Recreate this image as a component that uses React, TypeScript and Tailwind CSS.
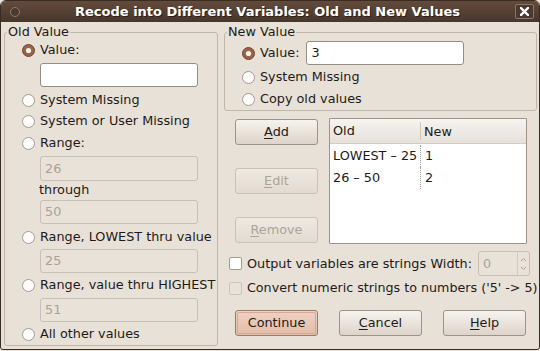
import React from 'react';

const font = { fontFamily: '"DejaVu Sans", Verdana, sans-serif' };

const Radio = ({ checked = false }: { checked?: boolean }) => (
  <svg width="13" height="13" viewBox="0 0 13 13" className="shrink-0">
    {checked ? (
      <>
        <circle cx="6.5" cy="6.5" r="6" fill="#9a6446" stroke="#6e4631" strokeWidth="1" />
        <circle cx="6.5" cy="6.5" r="2.6" fill="#fbf4ee" />
      </>
    ) : (
      <circle cx="6.5" cy="6.5" r="6" fill="#fdfcfb" stroke="#a39a90" strokeWidth="1" />
    )}
  </svg>
);

const RadioRow = ({ label, checked, h }: { label: string; checked?: boolean; h: string }) => (
  <div className={`flex items-center gap-[5px] ${h}`}>
    <Radio checked={checked} />
    <span className="whitespace-nowrap text-[12.8px] leading-none text-[#1e1a17]">{label}</span>
  </div>
);

const DimInput = ({ value, mt, h }: { value: string; mt: string; h: string }) => (
  <div
    className={`ml-[18px] w-[158px] ${mt} ${h} flex items-center rounded-[3px] border border-[#c9bfb4] bg-[#e9e2d9] pl-[4px] text-[12.8px] text-[#aaa198]`}
  >
    {value}
  </div>
);

const Btn = ({
  label,
  u,
  disabled,
  primary,
}: {
  label: string;
  u: number;
  disabled?: boolean;
  primary?: boolean;
}) => {
  const base = primary
    ? 'border-[#9c7a68] bg-gradient-to-b from-[#f0d2c3] to-[#e2bca8] text-[#1e1a17]'
    : disabled
      ? 'border-[#cbc1b6] bg-gradient-to-b from-[#efe9e2] to-[#e3dbd1] text-[#aca398]'
      : 'border-[#9e9387] bg-gradient-to-b from-[#f6f3ef] to-[#ddd4ca] text-[#1e1a17]';
  return (
    <div
      className={`flex h-[26px] w-[83px] items-center justify-center rounded-[3px] border text-[12.8px] ${base}`}
    >
      {primary ? (
        <div className="flex h-[22px] w-[79px] items-center justify-center rounded-[2px] border border-[#d7a991]">
          {label}
        </div>
      ) : (
        <span>
          {label.slice(0, u)}
          <span className="underline underline-offset-2">{label[u]}</span>
          {label.slice(u + 1)}
        </span>
      )}
    </div>
  );
};

export default function App() {
  return (
    <div style={font} className="h-[351px] w-[540px] bg-[#ebe4db]">
      <div className="flex h-[350px] w-[540px] flex-col overflow-hidden rounded-t-[6px] rounded-b-[3px] border border-[#3a2c22] bg-[#e8e1d8]">
        {/* title bar */}
        <div className="flex h-[21px] shrink-0 items-center bg-gradient-to-b from-[#624b3c] to-[#47362b]">
          <div className="ml-[9px] h-[10px] w-[10px] rounded-full border border-[#8c7b6f] bg-[#4b3a2f]" />
          <div
            className="flex-1 whitespace-nowrap text-center text-[13px] font-bold text-white"
            style={{ textShadow: '1px 1px 0 #2a1e17' }}
          >
            Recode into Different Variables: Old and New Values
          </div>
          <div className="mr-[5px] flex h-[15px] w-[19px] items-center justify-center rounded-[2px] border border-[#8a7668] bg-[#4c392d]">
            <svg width="9" height="9" viewBox="0 0 9 9">
              <path d="M1 1 L8 8 M8 1 L1 8" stroke="#ffffff" strokeWidth="2.4" strokeLinecap="square" />
            </svg>
          </div>
        </div>

        {/* body */}
        <div className="flex gap-[6px] pl-[3px]">
          {/* Old value */}
          <fieldset className="mt-[2px] h-[322px] w-[214px] shrink-0 rounded-[3px] border border-[#c2b6a9] pl-[17px]">
            <legend className="-ml-[15px] px-[1px] text-[12.8px] leading-[16px] text-[#1e1a17]">Old Value</legend>
            <RadioRow label="Value:" checked h="h-[21px]" />
            <div className="ml-[18px] mt-[2px] h-[24px] w-[158px] rounded-[3px] border border-[#978c80] bg-white" />
            <RadioRow label="System Missing" h="h-[22px] mt-[2px]" />
            <RadioRow label="System or User Missing" h="h-[21px]" />
            <RadioRow label="Range:" h="h-[22px]" />
            <DimInput value="26" mt="mt-[2px]" h="h-[25px]" />
            <div className="ml-[17px] flex h-[18px] items-center text-[12.8px] text-[#1e1a17]">through</div>
            <DimInput value="50" mt="mt-[1px]" h="h-[24px]" />
            <RadioRow label="Range, LOWEST thru value" h="h-[22px] mt-[2px]" />
            <DimInput value="25" mt="mt-[1px]" h="h-[24px]" />
            <RadioRow label="Range, value thru HIGHEST" h="h-[22px] mt-[1px]" />
            <DimInput value="51" mt="mt-[2px]" h="h-[24px]" />
            <RadioRow label="All other values" h="h-[22px] mt-[1px]" />
          </fieldset>

          {/* right column */}
          <div className="flex w-[313px] shrink-0 flex-col">
            <fieldset className="mt-[2px] h-[87px] rounded-[3px] border border-[#c2b6a9] pl-[17px]">
              <legend className="-ml-[15px] px-[1px] text-[12.8px] leading-[16px] text-[#1e1a17]">New Value</legend>
              <div className="flex h-[26px] items-center gap-[5px]">
                <Radio checked />
                <span className="text-[12.8px] text-[#1e1a17]">Value:</span>
                <div className="ml-[2px] flex h-[24px] w-[158px] items-center rounded-[3px] border border-[#978c80] bg-white pl-[4px] text-[12.8px] text-[#1e1a17]">
                  3
                </div>
              </div>
              <RadioRow label="System Missing" h="h-[22px]" />
              <RadioRow label="Copy old values" h="h-[22px]" />
            </fieldset>

            <div className="mt-[7px] flex pl-[11px]">
              <div className="flex flex-col gap-[23px] pt-[1px]">
                <Btn label="Add" u={0} />
                <Btn label="Edit" u={0} disabled />
                <Btn label="Remove" u={0} disabled />
              </div>
              <div className="ml-[11px] h-[126px] w-[198px] rounded-[1px] border border-[#9f9386] bg-white">
                <div className="flex h-[25px] items-center border-b border-[#d3cbc1] bg-gradient-to-b from-[#f6f4f1] to-[#e6e0d9] text-[12.8px] text-[#1e1a17]">
                  <div className="w-[90px] pl-[3px]">Old</div>
                  <div className="h-[18px] border-l border-[#cfc6bc] pl-[3px]">New</div>
                </div>
                <div className="pt-[1px] text-[12.8px] text-[#1e1a17]">
                  <div className="flex h-[22px] items-center">
                    <div className="w-[90px] whitespace-nowrap pl-[3px]">LOWEST – 25</div>
                    <div className="flex h-full items-center border-l border-dotted border-[#9a9a9a] pl-[4px]">1</div>
                  </div>
                  <div className="flex h-[22px] items-center">
                    <div className="w-[90px] pl-[3px]">26 – 50</div>
                    <div className="flex h-full items-center border-l border-dotted border-[#9a9a9a] pl-[4px]">2</div>
                  </div>
                </div>
              </div>
            </div>

            <div className="mt-[7px] flex h-[25px] items-center pl-[5px] pr-[7px] text-[12.8px] text-[#1e1a17]">
              <div className="h-[13px] w-[13px] shrink-0 rounded-[2px] border border-[#a39a90] bg-white" />
              <span className="ml-[5px] whitespace-nowrap">Output variables are strings</span>
              <span className="ml-auto whitespace-nowrap">Width:</span>
              <div className="ml-[6px] flex h-[25px] w-[52px] shrink-0 rounded-[3px] border border-[#c9bfb4] bg-[#e9e2d9]">
                <div className="flex flex-1 items-center pl-[4px] text-[#aaa198]">0</div>
                <div className="flex w-[12px] flex-col items-center justify-center border-l border-[#d2c9bf]">
                  <svg width="7" height="18" viewBox="0 0 7 18">
                    <path d="M1 6 L3.5 3.5 L6 6" fill="none" stroke="#aaa198" strokeWidth="1" />
                    <path d="M1 12 L3.5 14.5 L6 12" fill="none" stroke="#aaa198" strokeWidth="1" />
                  </svg>
                </div>
              </div>
            </div>

            <div className="mt-[1px] flex h-[22px] items-center pl-[5px] text-[12.8px] text-[#1e1a17]">
              <div className="h-[13px] w-[13px] shrink-0 rounded-[2px] border border-[#cdc4ba] bg-[#e9e2d9]" />
              <span className="ml-[5px] whitespace-nowrap text-[12.7px]">Convert numeric strings to numbers ('5' -&gt; 5)</span>
            </div>

            <div className="mt-[11px] flex gap-[21px] pl-[11px]">
              <Btn label="Continue" u={-1} primary />
              <Btn label="Cancel" u={0} />
              <Btn label="Help" u={0} />
            </div>
          </div>
        </div>
      </div>
    </div>
  );
}
